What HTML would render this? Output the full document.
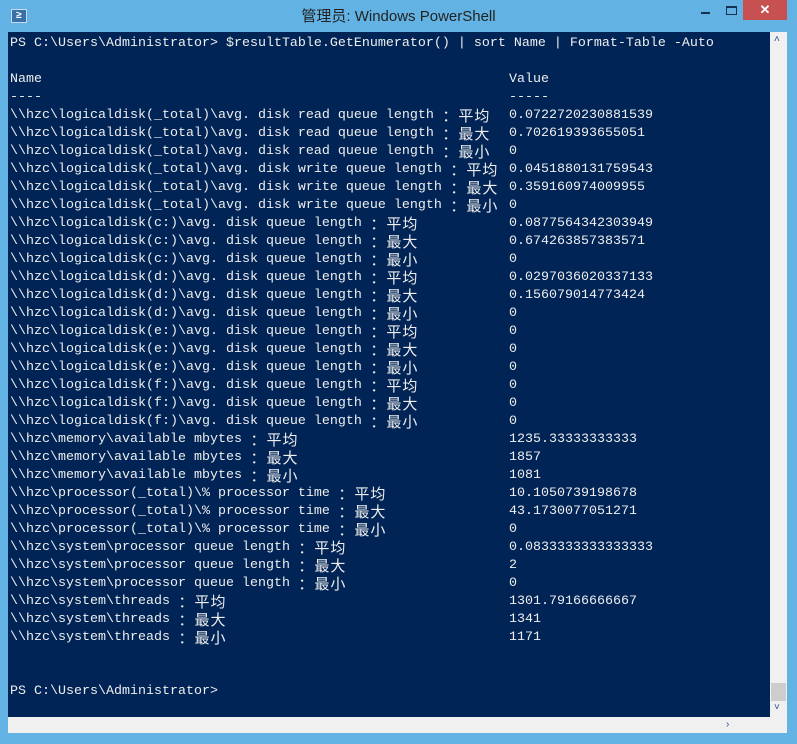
<!DOCTYPE html>
<html><head><meta charset="utf-8"><style>
html,body{margin:0;padding:0;width:797px;height:744px;overflow:hidden;background:#62b3e3;}
.title{position:absolute;left:0;top:0;width:797px;height:32px;font:15px "Liberation Sans","Noto Sans CJK SC",sans-serif;color:#222;text-align:center;line-height:34px;}
.close{position:absolute;left:743px;top:0;width:44px;height:20px;background:#c75050;color:#fff;text-align:center;font:bold 13px "Liberation Sans",sans-serif;line-height:20px;}
.min{position:absolute;left:701px;top:12px;width:9px;height:2px;background:#1a3050;}
.max{position:absolute;left:726px;top:6px;width:9px;height:6px;border:1px solid #1a3050;border-top-width:2px;}
.ico{position:absolute;left:11px;top:9px;width:14px;height:12px;background:#3a6fa8;border:1px solid #c8dcef;color:#fff;font:bold 10px "Liberation Sans";line-height:12px;text-align:center;}
.con{position:absolute;left:8px;top:32px;width:762px;height:685px;background:#012456;overflow:hidden;}
.vs{position:absolute;left:770px;top:32px;width:17px;height:685px;background:#f0f0f0;}
.thumb{position:absolute;left:1px;top:651px;width:15px;height:18px;background:#cdcdcd;}
.hs{position:absolute;left:8px;top:717px;width:779px;height:16px;background:#f0f0f0;}
.l{position:absolute;left:2px;height:18px;white-space:pre;font:13.33px "Liberation Mono",monospace;color:#eee;line-height:18px;}
.v{position:absolute;left:499px;}
.c{display:inline-block;width:16px;font:15px "Noto Sans CJK SC",sans-serif;text-align:center;vertical-align:top;line-height:18px;}
.arr{position:absolute;font:10px "Liberation Sans";color:#2a4a90;}
</style></head><body>
<div class="ico">≥</div>
<div class="title">管理员: Windows PowerShell</div>
<div class="min"></div><div class="max"></div><div class="close">✕</div>
<div class="con" id="c"></div>
<div class="vs"><div class="arr" style="left:4px;top:2px">˄</div><div class="thumb"></div><div class="arr" style="left:4px;top:670px">˅</div></div>
<div class="hs"><div class="arr" style="left:718px;top:2px">›</div></div>
<div class="con" style="background:none;top:34px">
<div class="l" style="top:1px">PS C:\Users\Administrator&gt; $resultTable.GetEnumerator() | sort Name | Format-Table -Auto</div>
<div class="l" style="top:37px">Name<span class="v">Value</span></div>
<div class="l" style="top:55px">----<span class="v">-----</span></div>
<div class="l" style="top:73px">\\hzc\logicaldisk(_total)\avg. disk read queue length <span class="c">：</span><span class="c">平</span><span class="c">均</span><span class="v">0.0722720230881539</span></div>
<div class="l" style="top:91px">\\hzc\logicaldisk(_total)\avg. disk read queue length <span class="c">：</span><span class="c">最</span><span class="c">大</span><span class="v">0.702619393655051</span></div>
<div class="l" style="top:109px">\\hzc\logicaldisk(_total)\avg. disk read queue length <span class="c">：</span><span class="c">最</span><span class="c">小</span><span class="v">0</span></div>
<div class="l" style="top:127px">\\hzc\logicaldisk(_total)\avg. disk write queue length <span class="c">：</span><span class="c">平</span><span class="c">均</span><span class="v">0.0451880131759543</span></div>
<div class="l" style="top:145px">\\hzc\logicaldisk(_total)\avg. disk write queue length <span class="c">：</span><span class="c">最</span><span class="c">大</span><span class="v">0.359160974009955</span></div>
<div class="l" style="top:163px">\\hzc\logicaldisk(_total)\avg. disk write queue length <span class="c">：</span><span class="c">最</span><span class="c">小</span><span class="v">0</span></div>
<div class="l" style="top:181px">\\hzc\logicaldisk(c:)\avg. disk queue length <span class="c">：</span><span class="c">平</span><span class="c">均</span><span class="v">0.0877564342303949</span></div>
<div class="l" style="top:199px">\\hzc\logicaldisk(c:)\avg. disk queue length <span class="c">：</span><span class="c">最</span><span class="c">大</span><span class="v">0.674263857383571</span></div>
<div class="l" style="top:217px">\\hzc\logicaldisk(c:)\avg. disk queue length <span class="c">：</span><span class="c">最</span><span class="c">小</span><span class="v">0</span></div>
<div class="l" style="top:235px">\\hzc\logicaldisk(d:)\avg. disk queue length <span class="c">：</span><span class="c">平</span><span class="c">均</span><span class="v">0.0297036020337133</span></div>
<div class="l" style="top:253px">\\hzc\logicaldisk(d:)\avg. disk queue length <span class="c">：</span><span class="c">最</span><span class="c">大</span><span class="v">0.156079014773424</span></div>
<div class="l" style="top:271px">\\hzc\logicaldisk(d:)\avg. disk queue length <span class="c">：</span><span class="c">最</span><span class="c">小</span><span class="v">0</span></div>
<div class="l" style="top:289px">\\hzc\logicaldisk(e:)\avg. disk queue length <span class="c">：</span><span class="c">平</span><span class="c">均</span><span class="v">0</span></div>
<div class="l" style="top:307px">\\hzc\logicaldisk(e:)\avg. disk queue length <span class="c">：</span><span class="c">最</span><span class="c">大</span><span class="v">0</span></div>
<div class="l" style="top:325px">\\hzc\logicaldisk(e:)\avg. disk queue length <span class="c">：</span><span class="c">最</span><span class="c">小</span><span class="v">0</span></div>
<div class="l" style="top:343px">\\hzc\logicaldisk(f:)\avg. disk queue length <span class="c">：</span><span class="c">平</span><span class="c">均</span><span class="v">0</span></div>
<div class="l" style="top:361px">\\hzc\logicaldisk(f:)\avg. disk queue length <span class="c">：</span><span class="c">最</span><span class="c">大</span><span class="v">0</span></div>
<div class="l" style="top:379px">\\hzc\logicaldisk(f:)\avg. disk queue length <span class="c">：</span><span class="c">最</span><span class="c">小</span><span class="v">0</span></div>
<div class="l" style="top:397px">\\hzc\memory\available mbytes <span class="c">：</span><span class="c">平</span><span class="c">均</span><span class="v">1235.33333333333</span></div>
<div class="l" style="top:415px">\\hzc\memory\available mbytes <span class="c">：</span><span class="c">最</span><span class="c">大</span><span class="v">1857</span></div>
<div class="l" style="top:433px">\\hzc\memory\available mbytes <span class="c">：</span><span class="c">最</span><span class="c">小</span><span class="v">1081</span></div>
<div class="l" style="top:451px">\\hzc\processor(_total)\% processor time <span class="c">：</span><span class="c">平</span><span class="c">均</span><span class="v">10.1050739198678</span></div>
<div class="l" style="top:469px">\\hzc\processor(_total)\% processor time <span class="c">：</span><span class="c">最</span><span class="c">大</span><span class="v">43.1730077051271</span></div>
<div class="l" style="top:487px">\\hzc\processor(_total)\% processor time <span class="c">：</span><span class="c">最</span><span class="c">小</span><span class="v">0</span></div>
<div class="l" style="top:505px">\\hzc\system\processor queue length <span class="c">：</span><span class="c">平</span><span class="c">均</span><span class="v">0.0833333333333333</span></div>
<div class="l" style="top:523px">\\hzc\system\processor queue length <span class="c">：</span><span class="c">最</span><span class="c">大</span><span class="v">2</span></div>
<div class="l" style="top:541px">\\hzc\system\processor queue length <span class="c">：</span><span class="c">最</span><span class="c">小</span><span class="v">0</span></div>
<div class="l" style="top:559px">\\hzc\system\threads <span class="c">：</span><span class="c">平</span><span class="c">均</span><span class="v">1301.79166666667</span></div>
<div class="l" style="top:577px">\\hzc\system\threads <span class="c">：</span><span class="c">最</span><span class="c">大</span><span class="v">1341</span></div>
<div class="l" style="top:595px">\\hzc\system\threads <span class="c">：</span><span class="c">最</span><span class="c">小</span><span class="v">1171</span></div>
<div class="l" style="top:649px">PS C:\Users\Administrator&gt;</div>
</div>
</body></html>
